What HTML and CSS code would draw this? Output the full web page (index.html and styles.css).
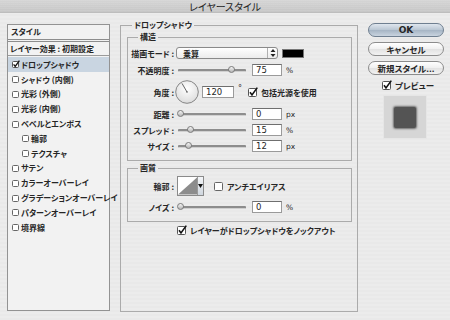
FILE: index.html
```html
<!DOCTYPE html>
<html lang="ja">
<head>
<meta charset="utf-8">
<title>レイヤースタイル</title>
<link rel="stylesheet" href="styles.css">
</head>
<body>
<div class="titlebar">レイヤースタイル</div>
<div class="content">
  <div class="styles">
    <div class="styles-head">スタイル</div>
    <div class="styles-preset">レイヤー効果 : 初期設定</div>
    <ul class="fx-list">
      <li class="fx selected"><svg class="cb-s" width="8" height="8" viewBox="0 0 8 8"><rect x="0.5" y="1.5" width="6" height="6" rx="1" fill="#fff" stroke="#555"/><path d="M1.6 4.3 L3.2 6.4 L7.4 0.6" fill="none" stroke="#111" stroke-width="1.3"/></svg>ドロップシャドウ</li>
      <li class="fx"><svg class="cb-s" width="8" height="8" viewBox="0 0 8 8"><rect x="0.5" y="1.5" width="6" height="6" rx="1" fill="#fff" stroke="#666"/></svg>シャドウ (内側)</li>
      <li class="fx"><svg class="cb-s" width="8" height="8" viewBox="0 0 8 8"><rect x="0.5" y="1.5" width="6" height="6" rx="1" fill="#fff" stroke="#666"/></svg>光彩 (外側)</li>
      <li class="fx"><svg class="cb-s" width="8" height="8" viewBox="0 0 8 8"><rect x="0.5" y="1.5" width="6" height="6" rx="1" fill="#fff" stroke="#666"/></svg>光彩 (内側)</li>
      <li class="fx"><svg class="cb-s" width="8" height="8" viewBox="0 0 8 8"><rect x="0.5" y="1.5" width="6" height="6" rx="1" fill="#fff" stroke="#666"/></svg>ベベルとエンボス</li>
      <li class="fx sub"><svg class="cb-s" width="8" height="8" viewBox="0 0 8 8"><rect x="0.5" y="1.5" width="6" height="6" rx="1" fill="#fff" stroke="#666"/></svg>輪郭</li>
      <li class="fx sub"><svg class="cb-s" width="8" height="8" viewBox="0 0 8 8"><rect x="0.5" y="1.5" width="6" height="6" rx="1" fill="#fff" stroke="#666"/></svg>テクスチャ</li>
      <li class="fx"><svg class="cb-s" width="8" height="8" viewBox="0 0 8 8"><rect x="0.5" y="1.5" width="6" height="6" rx="1" fill="#fff" stroke="#666"/></svg>サテン</li>
      <li class="fx"><svg class="cb-s" width="8" height="8" viewBox="0 0 8 8"><rect x="0.5" y="1.5" width="6" height="6" rx="1" fill="#fff" stroke="#666"/></svg>カラーオーバーレイ</li>
      <li class="fx"><svg class="cb-s" width="8" height="8" viewBox="0 0 8 8"><rect x="0.5" y="1.5" width="6" height="6" rx="1" fill="#fff" stroke="#666"/></svg>グラデーションオーバーレイ</li>
      <li class="fx"><svg class="cb-s" width="8" height="8" viewBox="0 0 8 8"><rect x="0.5" y="1.5" width="6" height="6" rx="1" fill="#fff" stroke="#666"/></svg>パターンオーバーレイ</li>
      <li class="fx"><svg class="cb-s" width="8" height="8" viewBox="0 0 8 8"><rect x="0.5" y="1.5" width="6" height="6" rx="1" fill="#fff" stroke="#666"/></svg>境界線</li>
    </ul>
  </div>

  <fieldset class="group main">
    <legend>ドロップシャドウ</legend>

    <fieldset class="group inner structure">
      <legend>構造</legend>
      <div class="row r1">
        <span class="lbl">描画モード :</span>
        <div class="select">
          <span class="select-text">乗算</span>
          <span class="stepper"><svg width="6" height="10" viewBox="0 0 6 10"><path d="M3 1 L5.5 4 L0.5 4 Z M3 9 L5.5 6 L0.5 6 Z" fill="#222"/></svg></span>
        </div>
        <span class="swatch"></span>
      </div>
      <div class="row r2">
        <span class="lbl">不透明度 :</span>
        <div class="slider"><span class="thumb" style="left:75%"></span></div>
        <span class="num">75</span>
        <span class="unit">%</span>
      </div>
      <div class="row r3">
        <span class="lbl">角度 :</span>
        <svg class="dial" width="24" height="24" viewBox="0 0 24 24">
          <defs><radialGradient id="dg" cx="50%" cy="35%" r="65%"><stop offset="0" stop-color="#ffffff"/><stop offset="1" stop-color="#dcdcdc"/></radialGradient></defs>
          <circle cx="12" cy="12" r="11.3" fill="url(#dg)" stroke="#7a7a7a" stroke-width="0.9"/>
          <line x1="12" y1="12" x2="7" y2="3.4" stroke="#555" stroke-width="0.9"/>
          <circle cx="12" cy="12" r="0.8" fill="#555"/>
        </svg>
        <span class="num num-wide">120</span>
        <span class="deg">°</span>
        <span class="check-label global"><svg class="cb" width="10" height="10" viewBox="0 0 10 10"><rect x="0.5" y="1.5" width="8" height="8" rx="1" fill="#fff" stroke="#555"/><path d="M2 5.3 L4 8 L9.3 0.6" fill="none" stroke="#111" stroke-width="1.6"/></svg>包括光源を使用</span>
      </div>
      <div class="row r4">
        <span class="lbl">距離 :</span>
        <div class="slider"><span class="thumb" style="left:0%"></span></div>
        <span class="num">0</span>
        <span class="unit">px</span>
      </div>
      <div class="row r5">
        <span class="lbl">スプレッド :</span>
        <div class="slider"><span class="thumb" style="left:15%"></span></div>
        <span class="num">15</span>
        <span class="unit">%</span>
      </div>
      <div class="row r6">
        <span class="lbl">サイズ :</span>
        <div class="slider"><span class="thumb" style="left:12%"></span></div>
        <span class="num">12</span>
        <span class="unit">px</span>
      </div>
    </fieldset>

    <fieldset class="group inner quality">
      <legend>画質</legend>
      <div class="row q1">
        <span class="lbl">輪郭 :</span>
        <div class="contour">
          <svg width="20" height="18" viewBox="0 0 20 18"><path d="M0 18 L20 0 L20 18 Z" fill="#8c8c8c"/></svg>
          <span class="contour-drop"><svg width="5" height="4" viewBox="0 0 5 4"><path d="M0 0 L5 0 L2.5 4 Z" fill="#111"/></svg></span>
        </div>
        <span class="check-label aa"><svg class="cb" width="10" height="10" viewBox="0 0 10 10"><rect x="0.5" y="1.5" width="8" height="8" rx="1" fill="#fff" stroke="#666"/></svg>アンチエイリアス</span>
      </div>
      <div class="row q2">
        <span class="lbl">ノイズ :</span>
        <div class="slider"><span class="thumb" style="left:0%"></span></div>
        <span class="num">0</span>
        <span class="unit">%</span>
      </div>
    </fieldset>

    <div class="knockout"><svg class="cb" width="10" height="10" viewBox="0 0 10 10"><rect x="0.5" y="1.5" width="8" height="8" rx="1" fill="#fff" stroke="#555"/><path d="M2 5.3 L4 8 L9.3 0.6" fill="none" stroke="#111" stroke-width="1.6"/></svg>レイヤーがドロップシャドウをノックアウト</div>
  </fieldset>

  <div class="side">
    <div class="btn default">OK</div>
    <div class="btn">キャンセル</div>
    <div class="btn">新規スタイル...</div>
    <div class="preview-check"><svg class="cb" width="10" height="10" viewBox="0 0 10 10"><rect x="0.5" y="1.5" width="8" height="8" rx="1" fill="#fff" stroke="#555"/><path d="M2 5.3 L4 8 L9.3 0.6" fill="none" stroke="#111" stroke-width="1.6"/></svg>プレビュー</div>
    <div class="preview"><div class="preview-shape"></div></div>
  </div>
</div>
</body>
</html>
```

FILE: styles.css
```css
* { box-sizing: border-box; }
html, body { margin: 0; padding: 0; }
body {
  width: 450px;
  height: 320px;
  overflow: hidden;
  background: repeating-linear-gradient(#ececec 0, #ececec 2px, #e9e9e9 2px, #e9e9e9 4px);
  font-family: "Noto Sans CJK JP", "Noto Sans", sans-serif;
  font-size: 8px;
  font-weight: 700;
  color: #262626;
  font-feature-settings: "palt";
}

.titlebar {
  height: 13px;
  line-height: 13px;
  text-align: center;
  font-size: 10px;
  font-weight: 400;
  color: #222;
  background: repeating-linear-gradient(rgba(255,255,255,0.08) 0, rgba(255,255,255,0.08) 1px, rgba(0,0,0,0) 1px, rgba(0,0,0,0) 2px), linear-gradient(#d5d5d5, #c6c6c6);
  border-bottom: 1px solid #bdbdbd;
}

.content {
  display: flex;
  align-items: flex-start;
  padding-left: 7px;
}

/* left styles list */
.styles {
  margin-top: 11px;
  width: 103px;
  height: 287px;
  border: 1px solid #939393;
  background: #f2f2f2;
}
.styles-head {
  height: 17px;
  line-height: 14px;
  padding-left: 3px;
  border-bottom: 3px double #8d8d8d;
}
.styles-preset {
  height: 14px;
  line-height: 13px;
  padding-left: 2px;
  border-bottom: 1px solid #9a9a9a;
}
.fx-list {
  list-style: none;
  margin: 1px 0 0;
  padding: 0;
}
.fx {
  display: flex;
  align-items: center;
  height: 14.8px;
  padding-left: 4px;
  white-space: nowrap;
}
.fx.sub { padding-left: 14px; }
.fx.selected { background: #c9d5e1; }
.cb-s { flex: none; margin-right: 1px; }

/* fieldsets */
.group {
  margin: 0;
  border: 1px solid #ababab;
  min-width: 0;
}
.group > legend {
  font-size: 8px;
  line-height: 10px;
  padding: 0 2px;
}
.main {
  margin-left: 10px;
  margin-top: 7px;
  width: 238px;
  height: 292px;
  padding: 2px 5px 0 6px;
}
.main > legend { margin-left: 5px; }
.inner {
  width: 225px;
  padding: 0 0 0 1px;
}
.inner > legend { margin-left: 9px; }
.structure {
  height: 129px;
  padding-top: 3px;
}
.quality {
  margin-top: 2px;
  height: 59px;
  padding-top: 3px;
}

.row {
  display: flex;
  align-items: center;
  height: 16px;
}
.lbl {
  flex: none;
  width: 45px;
  text-align: right;
  white-space: nowrap;
}
.r2 { margin-top: 1px; }
.r3 { margin-top: 2px; height: 24px; }
.r4 { margin-top: 2px; }
.q1 { height: 20px; }
.q2 { margin-top: 3px; }

.select {
  margin-left: 2px;
  width: 102px;
  height: 12px;
  display: flex;
  align-items: center;
  justify-content: space-between;
  border: 1px solid #8a8a8a;
  border-radius: 3px;
  background: linear-gradient(#ffffff, #ececec);
}
.select-text { padding-left: 6px; }
.stepper {
  width: 10px;
  height: 10px;
  display: flex;
  align-items: center;
  justify-content: center;
  border-left: 1px solid #b0b0b0;
}
.swatch {
  margin-left: 4px;
  width: 22px;
  height: 9px;
  background: #000;
  border: 1px solid #777;
}

.slider {
  position: relative;
  margin-left: 4px;
  width: 68px;
  height: 8px;
}
.slider::before {
  content: "";
  position: absolute;
  left: 0; right: 0;
  top: 3px;
  height: 2px;
  background: #8d8d8d;
  border-bottom: 1px solid #d0d0d0;
  border-radius: 1px;
}
.thumb {
  position: absolute;
  top: 0;
  width: 7px;
  height: 7px;
  margin-left: -1px;
  border-radius: 50%;
  border: 1px solid #7a7a7a;
  background: linear-gradient(#f4f4f4, #b5b5b5);
}

.num {
  margin-left: 6px;
  width: 30px;
  height: 12px;
  line-height: 11px;
  padding-left: 3px;
  background: #fff;
  border: 1px solid #9a9a9a;
  border-top-color: #6f6f6f;
  font-family: "DejaVu Sans", sans-serif;
  font-weight: 400;
  font-size: 8.5px;
}
.unit {
  margin-left: 4px;
  font-family: "DejaVu Sans", sans-serif;
  font-size: 7.5px;
  font-weight: 400;
}

.dial { margin-left: 1px; flex: none; }
.num-wide { margin-left: 3px; width: 32px; }
.deg {
  margin-left: 4px;
  align-self: flex-start;
  margin-top: 4px;
  font-family: "DejaVu Sans", sans-serif;
  font-weight: 400;
  font-size: 8px;
}
.check-label {
  display: flex;
  align-items: center;
  white-space: nowrap;
}
.cb { flex: none; margin-right: 3px; }
.global { margin-left: 6px; }

.contour {
  margin-left: 3px;
  display: flex;
  width: 27px;
  height: 20px;
  border: 1px solid #8a8a8a;
  background: #fff;
}
.contour svg { display: block; }
.contour-drop {
  flex: 1;
  display: flex;
  align-items: center;
  justify-content: center;
  border-left: 1px solid #9a9a9a;
  background: linear-gradient(#f4f6f9, #cfd6de);
}
.aa { margin-left: 10px; }

.knockout {
  margin-top: 2px;
  height: 12px;
  display: flex;
  align-items: center;
  padding-left: 50px;
  white-space: nowrap;
}

/* right column */
.side {
  margin-left: 10px;
  margin-top: 10px;
  width: 76px;
  display: flex;
  flex-direction: column;
}
.btn {
  height: 14px;
  line-height: 12px;
  text-align: center;
  border: 1px solid #8c8c8c;
  border-radius: 7px;
  background: linear-gradient(#ffffff 0%, #f0f0f0 50%, #e2e2e2 51%, #f2f2f2 100%);
  margin-bottom: 5px;
  font-size: 8.5px;
}
.btn.default {
  border-color: #6f7f90;
  background: linear-gradient(#dfe6ee 0%, #b9c6d3 50%, #a5b4c4 51%, #c9d4df 100%);
  font-family: "DejaVu Sans", sans-serif;
  font-size: 9px;
}
.preview-check {
  height: 10px;
  display: flex;
  align-items: center;
  padding-left: 14px;
  font-size: 8.5px;
}
.preview {
  margin-top: 5px;
  margin-left: 15px;
  width: 44px;
  height: 44px;
  background: #d6d6d6;
  border: 1px solid #e6e6e6;
  display: flex;
  align-items: center;
  justify-content: center;
}
.preview-shape {
  width: 22px;
  height: 21px;
  background: #545454;
  border-radius: 2px;
  box-shadow: 0 0 2px 1px rgba(40,40,40,0.6);
}
```
